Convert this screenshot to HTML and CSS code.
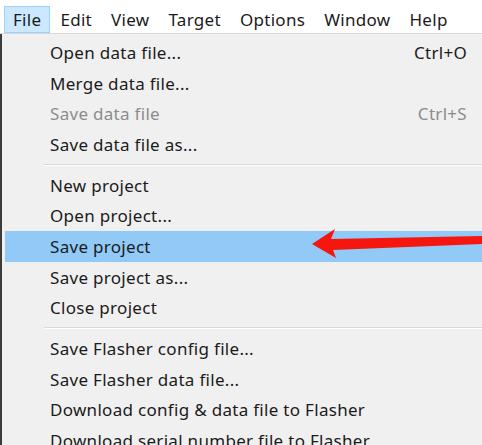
FILE: index.html
```html
<!DOCTYPE html>
<html lang="en">
  <head>
    <meta charset="UTF-8" />
    <meta name="viewport" content="width=device-width, initial-scale=1.0" />
    <title>File menu</title>
    <link rel="stylesheet" href="styles.css">
  </head>
  <body>
    <div class="menubar">
      <span class="menu-title active">File</span>
      <span class="menu-title">Edit</span>
      <span class="menu-title">View</span>
      <span class="menu-title">Target</span>
      <span class="menu-title">Options</span>
      <span class="menu-title">Window</span>
      <span class="menu-title">Help</span>
    </div>
    <div class="dropdown">
      <div class="item"><span>Open data file...</span><span class="key">Ctrl+O</span></div>
      <div class="item"><span>Merge data file...</span></div>
      <div class="item disabled"><span>Save data file</span><span class="key">Ctrl+S</span></div>
      <div class="item"><span>Save data file as...</span></div>
      <div class="sep"></div>
      <div class="item"><span>New project</span></div>
      <div class="item"><span>Open project...</span></div>
      <div class="item selected"><span>Save project</span></div>
      <div class="item"><span>Save project as...</span></div>
      <div class="item"><span>Close project</span></div>
      <div class="sep"></div>
      <div class="item"><span>Save Flasher config file...</span></div>
      <div class="item"><span>Save Flasher data file...</span></div>
      <div class="item"><span>Download config &amp; data file to Flasher</span></div>
      <div class="item"><span>Download serial number file to Flasher</span></div>

      <svg class="arrow" width="180" height="32" viewBox="0 0 180 32">
        <polygon points="8,15 31,0 27,10 180,7 180,15 29,21 32,29" fill="#f5170f" />
      </svg>
    </div>
  </body>
</html>
```

FILE: styles.css
```css
* {
  box-sizing: border-box;
  margin: 0;
  padding: 0;
}

body {
  font-family: "Noto Sans", "Open Sans", sans-serif;
  font-size: 17px;
  letter-spacing: 0.3px;
  color: #1b1b1b;
  background-color: #f0f0f0;
  overflow: hidden;
}

.menubar {
  display: flex;
  background-color: #ffffff;
  padding: 6px 0 0 4px;
  border-bottom: 1px solid #d9d9d9;
  height: 34px;
}

.menu-title {
  padding: 0 8px;
  height: 27px;
  line-height: 25px;
  border: 1px solid transparent;
  margin-right: 1px;
}

.menu-title.active {
  background-color: #cce8ff;
  border-color: #99d1ff;
}

.dropdown {
  position: relative;
  border-left: 2px solid #3c3c3c;
  padding: 3px 0 0 3px;
  min-height: 420px;
}

.item {
  display: flex;
  justify-content: space-between;
  align-items: center;
  height: 30.7px;
  padding: 0 15px 0 45px;
}

.key {
  color: #1b1b1b;
}

.item.disabled,
.item.disabled .key {
  color: #8c8c8c;
}

.item.selected {
  background-color: #91c9f7;
}

.sep {
  height: 2px;
  margin: 4px 0 4px 39px;
  background-color: #d9d9d9;
  border-bottom: 1px solid #ffffff;
}

.arrow {
  position: absolute;
  left: 302px;
  top: 195px;
}
```
